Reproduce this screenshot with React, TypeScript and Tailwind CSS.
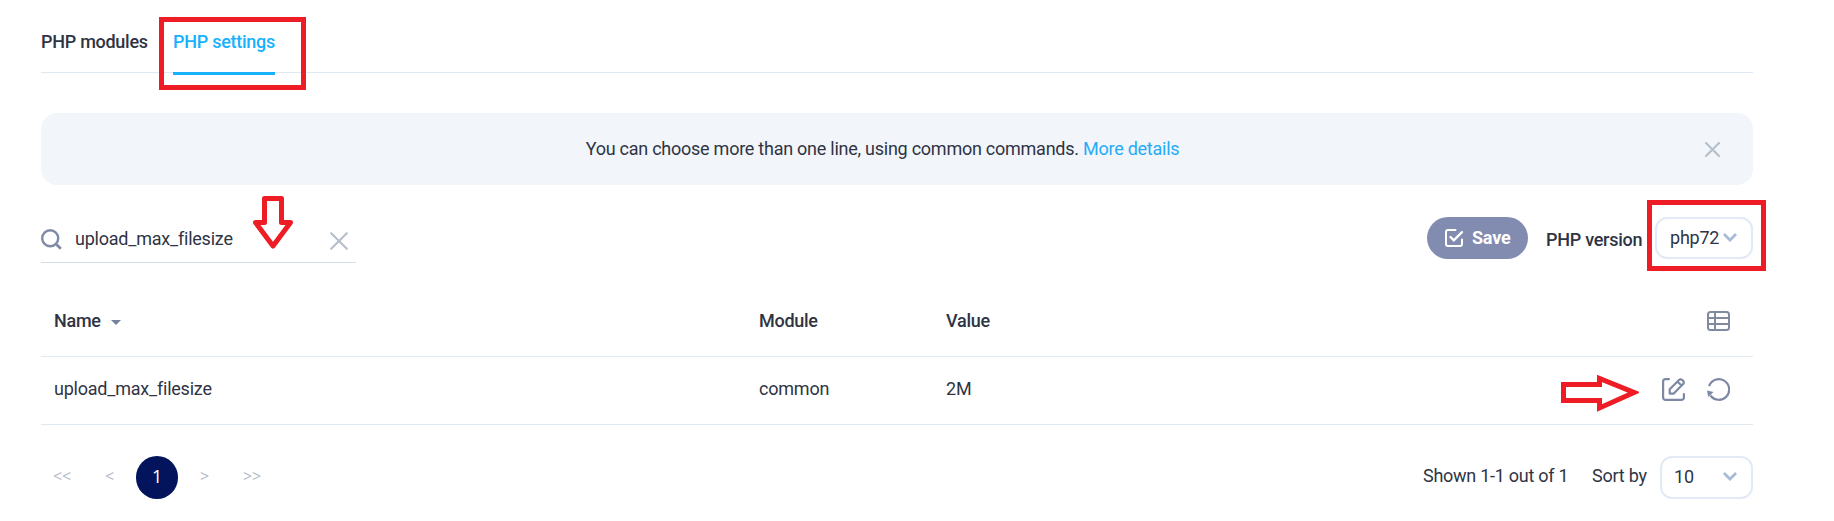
import React from 'react'

const columns = [
  { label: 'Name', width: 'w-[705px]', sorted: true },
  { label: 'Module', width: 'w-[187px]', sorted: false },
  { label: 'Value', width: 'flex-1', sorted: false }
]

const settings = [{ name: 'upload_max_filesize', module: 'common', value: '2M' }]

const SearchIcon = () => (
  <svg className="w-[21px] h-[21px] shrink-0" viewBox="0 0 21 21" fill="none" stroke="#7e8ba5" strokeWidth="2.4">
    <circle cx="9.2" cy="9.2" r="8" />
    <path d="M15.5 15.5l4.3 4.3" strokeWidth="2.8" />
  </svg>
)

const CrossIcon = ({ className, strokeWidth }: { className: string; strokeWidth: number }) => (
  <svg className={className} viewBox="0 0 18 18" fill="none" stroke="#b7c0ca" strokeWidth={strokeWidth} strokeLinecap="round">
    <path d="M1.2 1.2l15.6 15.6M16.8 1.2L1.2 16.8" />
  </svg>
)

const ChevronIcon = () => (
  <svg className="w-[14px] h-[9px] shrink-0" viewBox="0 0 14 9" fill="none" stroke="#a9bcd6" strokeWidth="2.8">
    <path d="M0.9 1l6.1 6.1L13.1 1" />
  </svg>
)

const CheckSquareIcon = () => (
  <svg className="w-[18px] h-[18px]" viewBox="0 0 18 18" fill="none" stroke="white" strokeWidth="2" strokeLinecap="round">
    <path d="M10.5 1H3a2 2 0 0 0-2 2v12a2 2 0 0 0 2 2h12a2 2 0 0 0 2-2v-4.5" />
    <path d="M5.5 8l3.3 3.3L17 3.2" strokeWidth="2.4" />
  </svg>
)

const TableIcon = () => (
  <svg className="w-[23px] h-[20px]" viewBox="0 0 23 20" fill="none" stroke="#808ba0" strokeWidth="2">
    <rect x="1" y="1" width="21" height="18" rx="2.5" />
    <path d="M8 1v18M1 7h21M1 13h21" />
  </svg>
)

const EditIcon = () => (
  <svg className="w-[23px] h-[23px]" viewBox="0 0 23 23" fill="none" stroke="#7d89a4" strokeWidth="2.2">
    <path d="M7 1.1H3.6A2.5 2.5 0 0 0 1.1 3.6v15.8a2.5 2.5 0 0 0 2.5 2.5h15.8a2.5 2.5 0 0 0 2.5-2.5V16" strokeLinecap="round" />
    <path d="M7.7 15.6v-4.3l9.3-9.3a2.3 2.3 0 0 1 3.3 0l.8.8a2.3 2.3 0 0 1 0 3.3l-9.3 9.5zM15.5 3.5l4.2 4.2" strokeLinejoin="round" />
  </svg>
)

const ResetIcon = () => (
  <svg className="w-[23px] h-[23px]" viewBox="0 0 23 23" fill="none" stroke="#7d89a4" strokeWidth="2.2">
    <path d="M2.1 8.2A10.3 10.3 0 1 1 3.5 17.5" />
    <path d="M0 12.5l6.5 1.5L1.3 19z" fill="#7d89a4" stroke="none" />
  </svg>
)

const App: React.FC = () => {
  return (
    <div className="relative w-[1834px] h-[521px] overflow-hidden bg-white pl-[41px] pr-[81px] font-['Roboto',sans-serif] text-[18px] leading-6 tracking-[-0.22px] text-[#2f3444]">
      <nav className="flex h-[73px] gap-[25px] border-b border-[#dfe9f6] pt-[30px] font-medium tracking-[-0.27px]">
        <button className="h-[45px] w-[107px] whitespace-nowrap border-b-3 border-transparent pb-[18px] text-left">PHP modules</button>
        <button className="h-[45px] w-[102px] whitespace-nowrap border-b-3 border-[#17b1ff] pb-[18px] text-left text-[#17b1ff]">
          PHP settings
        </button>
      </nav>

      <div className="mt-10 flex h-[72px] items-center rounded-2xl bg-[#f2f6fb] pr-[33px]">
        <p className="flex-1 pl-[19px] text-center tracking-[-0.25px]">
          You can choose more than one line, using common commands. <a className="text-[#25acf7]">More details</a>
        </p>
        <CrossIcon className="w-[15px] h-[15px]" strokeWidth={2.6} />
      </div>

      <div className="mt-8 flex h-[46px] items-start justify-between">
        <div className="flex h-[46px] w-[315px] items-center border-b border-[#d3ddec] pr-2">
          <SearchIcon />
          <span className="mb-[2px] ml-[13px] flex-1">upload_max_filesize</span>
          <CrossIcon className="mt-[3px] w-[18px] h-[18px]" strokeWidth={2.2} />
        </div>
        <div className="flex items-center">
          <button className="flex h-[42px] w-[101px] items-center gap-[9px] rounded-full bg-[#828bb0] pl-[18px] pb-px font-bold text-white">
            <CheckSquareIcon />
            Save
          </button>
          <span className="ml-[18px] mt-[3px] w-[109px] whitespace-nowrap font-medium tracking-[-0.27px]">PHP version</span>
          <button className="flex h-[42px] w-[98px] items-center justify-between rounded-xl border-2 border-[#e1eaf5] pb-px pl-[13px] pr-[14px]">
            php72
            <ChevronIcon />
          </button>
        </div>
      </div>

      <div className="mt-[26px]">
        <div className="flex h-[68px] items-center border-b border-[#e1e9f0] pb-[3px] pl-[13px] pr-[23px] font-medium tracking-[-0.27px]">
          {columns.map((column) => (
            <div key={column.label} className={`${column.width} flex items-center`}>
              {column.label}
              {column.sorted && (
                <svg className="ml-[10px] mt-0.5 w-[10px] h-[5px]" viewBox="0 0 10 5">
                  <path d="M0 0h10L5 5z" fill="#75829b" />
                </svg>
              )}
            </div>
          ))}
          <TableIcon />
        </div>
        {settings.map((setting) => (
          <div key={setting.name} className="flex h-[68px] items-center border-b border-[#e1e9f0] pb-[3px] pl-[13px] pr-[23px]">
            <div className="w-[705px]">{setting.name}</div>
            <div className="w-[187px]">{setting.module}</div>
            <div className="flex-1">{setting.value}</div>
            <div className="mt-px flex gap-[22px]">
              <EditIcon />
              <ResetIcon />
            </div>
          </div>
        ))}
      </div>

      <div className="mt-[31px] flex h-[43px] items-center justify-between">
        <div className="flex items-center pl-3 font-['Open_Sans',sans-serif] text-[16px] text-[#b0b9c8]">
          <span className="w-[51px] pb-[3px]">&lt;&lt;</span>
          <span className="w-8 pb-[3px] pl-px">&lt;</span>
          <span className="flex h-[43px] w-[42px] items-center justify-center rounded-full bg-[#03145c] pb-[3px] text-[18px] text-white">1</span>
          <span className="ml-[22px] w-[43px] pb-[3px]">&gt;</span>
          <span className="pb-[3px]">&gt;&gt;</span>
        </div>
        <div className="flex items-center">
          <span className="w-[169px] pb-[3px] tracking-[-0.27px]">Shown 1-1 out of 1</span>
          <span className="w-[68px] pb-[3px]">Sort by</span>
          <button className="flex h-[43px] w-[93px] items-center justify-between rounded-xl border-2 border-[#e1eaf5] pb-[2px] pl-3 pr-[14px]">
            10
            <ChevronIcon />
          </button>
        </div>
      </div>

      {/* Callouts over the panel */}
      <div className="absolute left-[159px] top-[17px] h-[73px] w-[147px] border-5 border-[#ee1c25]" />
      <div className="absolute left-[1647px] top-[200px] h-[71px] w-[119px] border-5 border-[#ee1c25]" />
      <svg className="absolute left-[253px] top-[196px] h-[54px] w-10" viewBox="0 0 40 54" fill="white" stroke="#ee1c25" strokeWidth="5">
        <path d="M11.5 2.5h17v24h9L20 50 2.5 26.5h9z" strokeLinejoin="round" />
      </svg>
      <svg className="absolute left-[1561px] top-[373px] h-[39px] w-[78px]" viewBox="0 0 78 39" fill="white" stroke="#ee1c25" strokeWidth="5">
        <path d="M2.5 11.5h36v-6L73 19.500l-34.500 15.500v-7.500h-36z" />
      </svg>
    </div>
  )
}

export default App
